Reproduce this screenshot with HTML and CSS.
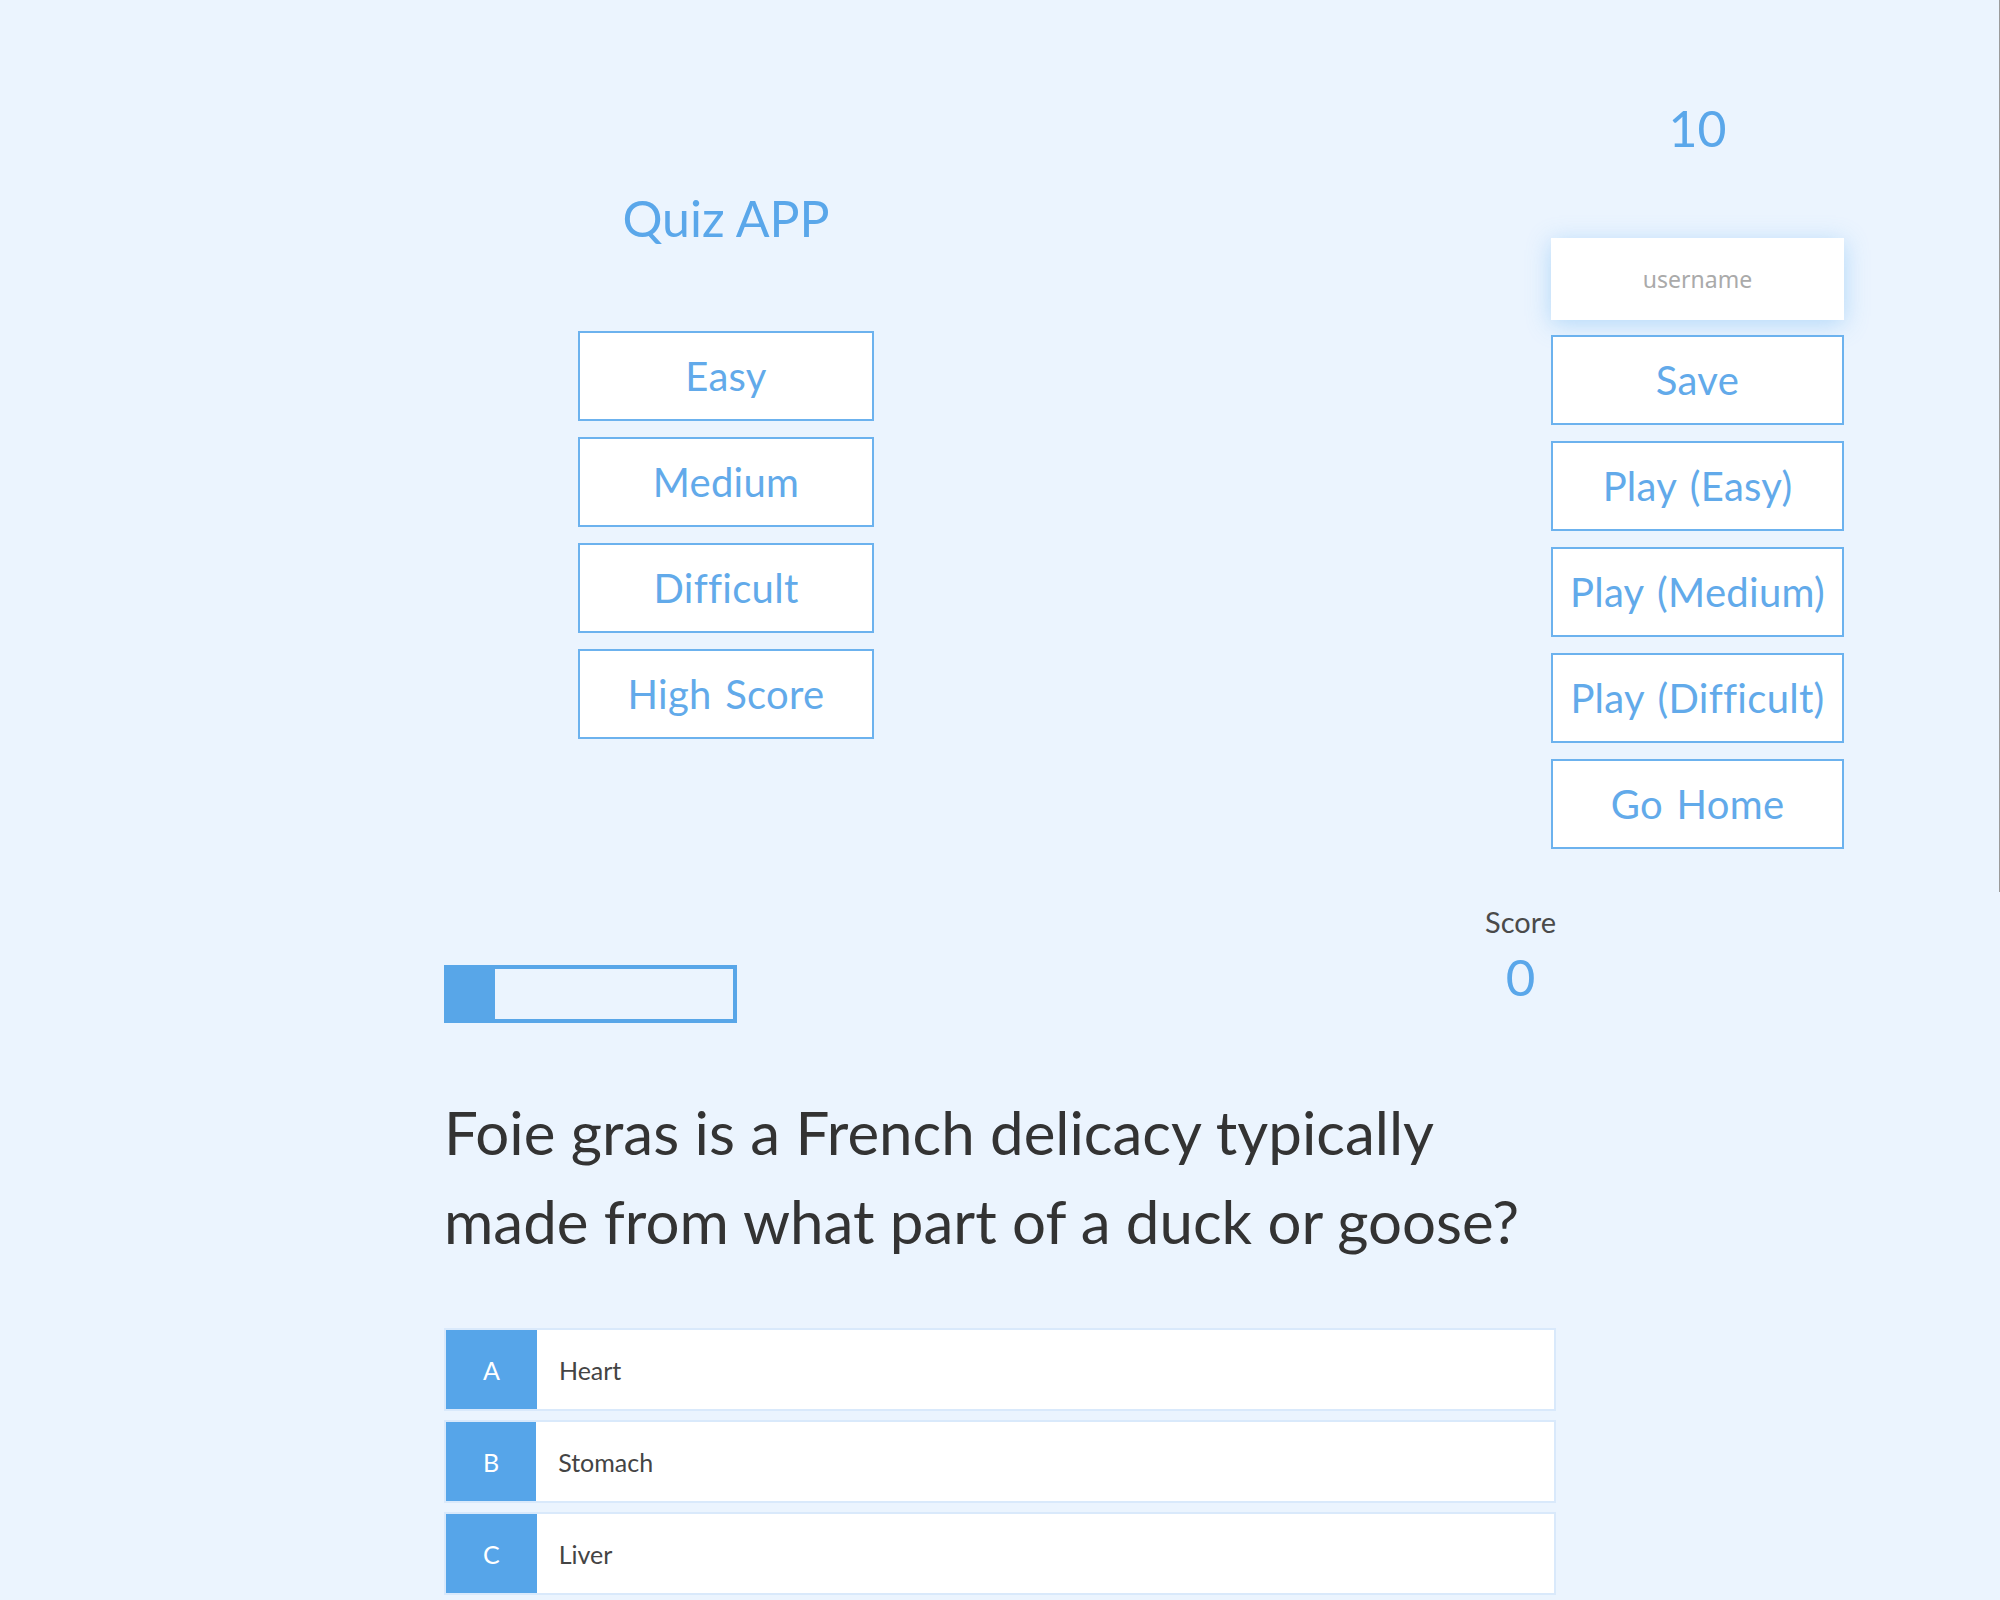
FILE: index.html
```html
<!DOCTYPE html>
<html lang="en">
<head>
<meta charset="utf-8">
<title>Quiz APP</title>
<link rel="stylesheet" href="styles.css">
</head>
<body>
<div class="top">
  <div class="col-left">
    <h1 class="title">Quiz APP</h1>
    <div class="btns">
      <button class="btn">Easy</button>
      <button class="btn">Medium</button>
      <button class="btn">Difficult</button>
      <button class="btn">High Score</button>
    </div>
  </div>
  <div class="col-right">
    <div class="timer">10</div>
    <input class="username" type="text" placeholder="username">
    <div class="btns">
      <button class="btn">Save</button>
      <button class="btn">Play (Easy)</button>
      <button class="btn">Play (Medium)</button>
      <button class="btn">Play (Difficult)</button>
      <button class="btn">Go Home</button>
    </div>
  </div>
</div>
<div class="quiz">
  <div class="quiz-head">
    <div class="progress"><div class="progress-fill" style="width: 47px"></div></div>
    <div class="score">
      <div class="score-label">Score</div>
      <div class="score-value">0</div>
    </div>
  </div>
  <h2 class="question">Foie gras is a French delicacy typically made from what part of a duck or goose?</h2>
  <div class="answers">
    <div class="answer"><span class="letter">A</span><span class="answer-text">Heart</span></div>
    <div class="answer"><span class="letter">B</span><span class="answer-text">Stomach</span></div>
    <div class="answer"><span class="letter">C</span><span class="answer-text">Liver</span></div>
  </div>
</div>
</body>
</html>
```
FILE: styles.css
```css
* { box-sizing: border-box; }
html, body { margin: 0; padding: 0; }
body {
  background: #ebf4fe;
  font-family: Lato, "Open Sans", sans-serif;
  color: #333;
  width: 2000px;
  overflow: hidden;
}
.top {
  display: flex;
  height: 892px;
  padding-left: 578px;
  gap: 677px;
  border-right: 1px solid #9a9a9a;
}
.col-left {
  width: 296px;
  display: flex;
  flex-direction: column;
  padding-top: 188px;
}
.title {
  margin: 0;
  font-size: 50px;
  font-weight: 400;
  line-height: 60px;
  text-align: center;
  color: #5aa7ea;
}
.col-left .btns { margin-top: 83px; }
.btns {
  display: flex;
  flex-direction: column;
  gap: 16px;
}
.btn {
  height: 90px;
  width: 100%;
  background: #fff;
  border: 2px solid #6cb2ee;
  color: #62aaea;
  font-family: Lato, "Open Sans", sans-serif;
  font-size: 40px;
  letter-spacing: 0.3px;
  word-spacing: 3px;
  padding: 0;
  cursor: pointer;
}
.col-right {
  width: 293px;
  display: flex;
  flex-direction: column;
  padding-top: 96px;
}
.timer {
  font-size: 50px;
  line-height: 64px;
  text-align: center;
  color: #5aa7ea;
}
.username {
  margin-top: 78px;
  height: 82px;
  width: 100%;
  border: none;
  background: #fff;
  text-align: center;
  font-family: "Noto Sans", "Open Sans", sans-serif;
  font-size: 23px;
  color: #555;
  box-shadow: 0 4px 22px rgba(110, 185, 245, 0.45);
  outline: none;
}
.username::placeholder { color: #aaa; }
.col-right .btns { margin-top: 15px; }

.quiz {
  width: 1112px;
  margin-left: 444px;
  padding-top: 12px;
}
.quiz-head {
  display: flex;
  justify-content: space-between;
  align-items: flex-start;
}
.progress {
  margin-top: 61px;
  width: 293px;
  height: 58px;
  border: 4px solid #58a6e8;
  display: flex;
}
.progress-fill {
  height: 100%;
  background: #58a6e8;
}
.score {
  text-align: center;
}
.score-label {
  font-size: 29px;
  line-height: 35px;
  color: #4a4a4a;
}
.score-value {
  margin-top: 7px;
  font-size: 51px;
  line-height: 61px;
  color: #5aa7ea;
}
.question {
  margin: 65px 0 0 0;
  font-size: 60px;
  font-weight: 400;
  line-height: 89px;
  color: #333;
}
.answers {
  margin-top: 62px;
  display: flex;
  flex-direction: column;
  gap: 9px;
}
.answer {
  display: flex;
  align-items: stretch;
  height: 83px;
  background: #fff;
  border: 2px solid #d9e9fb;
  font-size: 25px;
}
.letter {
  display: flex;
  align-items: center;
  justify-content: center;
  padding: 0 37px;
  background: #56a5e9;
  color: #fff;
}
.answer-text {
  display: flex;
  align-items: center;
  padding-left: 22px;
  color: #444;
}
```
